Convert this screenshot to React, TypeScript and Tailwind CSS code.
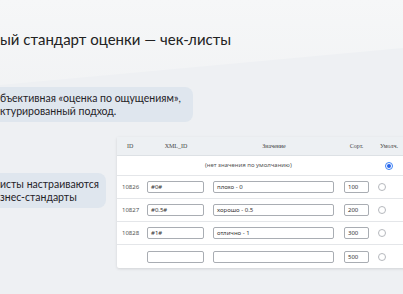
import React from "react";

const rows = [
  { id: "10826", xml: "#0#", val: "плохо - 0", sort: "100" },
  { id: "10827", xml: "#0.5#", val: "хорошо - 0.5", sort: "200" },
  { id: "10828", xml: "#1#", val: "отлично - 1", sort: "300" },
  { id: "", xml: "", val: "", sort: "500" },
];

function Radio({ checked }: { checked?: boolean }) {
  return checked ? (
    <span className="flex h-[8px] w-[8px] items-center justify-center rounded-full border border-[#3b82f6] bg-white">
      <span className="h-[4px] w-[4px] rounded-full bg-[#2563eb]" />
    </span>
  ) : (
    <span className="h-[8px] w-[8px] rounded-full border border-[#b5b8bd] bg-white" />
  );
}

function Input({ w, v }: { w: string; v: string }) {
  return (
    <div
      className={`${w} flex h-[12px] items-center rounded-[2px] border border-[#a9adb3] bg-white px-[3px] text-[6px] leading-none text-[#333]`}
    >
      {v}
    </div>
  );
}

export default function App() {
  return (
    <div
      className="relative h-[294px] w-[403px] overflow-hidden bg-gradient-to-b from-[#f6f7f8] to-[#e8eaed]"
      style={{ fontFamily: 'Lato, "Noto Sans", sans-serif' }}
    >
      <div
        className="pointer-events-none absolute inset-0 bg-[#eef0f3]"
        style={{ clipPath: "polygon(0 85px, 403px 48px, 403px 294px, 0 294px)" }}
      />
      <div className="relative flex flex-col">
        <div className="pt-[29px] text-[15px] leading-[20px] text-[#222]">
          ый стандарт оценки — чек-листы
        </div>
        <div className="mt-[38px] w-[193px] rounded-r-[8px] bg-[#dfe6ee] pb-[4px] pt-[5px] text-[10.5px] leading-[13px] text-[#1f2328]">
          <div className="whitespace-nowrap">бъективная «оценка по ощущениям»,</div>
          <div className="whitespace-nowrap">ктурированный подход.</div>
        </div>
        <div className="mt-[15px] flex">
          <div className="w-[117px] shrink-0">
            <div className="mt-[36px] w-[106px] rounded-r-[8px] bg-[#dfe6ee] pb-[4px] pt-[5px] text-[10.5px] leading-[13px] text-[#1f2328]">
              <div className="whitespace-nowrap">исты настраиваются</div>
              <div className="whitespace-nowrap">знес-стандарты</div>
            </div>
          </div>
          <div className="w-[300px] shrink-0 self-start rounded-bl-[2px] bg-white shadow-[0_1px_3px_rgba(0,0,0,0.12)]">
            <div
              className="flex h-[19px] items-center border-b border-[#dde1e5] bg-[#edf0f3] text-[6px] text-[#444]"
              style={{ fontFamily: '"Liberation Serif", serif' }}
            >
              <div className="w-[26px] pl-[10px]">ID</div>
              <div className="w-[66px] text-center">XML_ID</div>
              <div className="w-[130px] text-center">Значение</div>
              <div className="w-[35px] text-center">Сорт.</div>
              <div className="w-[30px] text-center">Умолч.</div>
            </div>
            <div
              className="flex h-[20px] items-center border-b border-[#e4e6e9] text-[6px] text-[#555]"
              style={{ fontFamily: '"Noto Sans", sans-serif' }}
            >
              <div className="w-[257px] pl-[88px]">(нет значения по умолчанию)</div>
              <div className="flex w-[30px] justify-center">
                <Radio checked />
              </div>
            </div>
            {rows.map((r, i) => (
              <div
                key={i}
                className={`flex h-[23px] items-center text-[6px] text-[#555] ${
                  i < rows.length - 1 ? "border-b border-[#e4e6e9]" : ""
                }`}
                style={{ fontFamily: '"Noto Sans", sans-serif' }}
              >
                <div className="w-[30px] pl-[5px]">{r.id}</div>
                <div className="w-[66px]">
                  <Input w="w-[57px]" v={r.xml} />
                </div>
                <div className="w-[131px]">
                  <Input w="w-[121px]" v={r.val} />
                </div>
                <div className="w-[30px]">
                  <Input w="w-[25px]" v={r.sort} />
                </div>
                <div className="flex w-[16px] justify-center">
                  <Radio />
                </div>
              </div>
            ))}
          </div>
        </div>
      </div>
    </div>
  );
}
